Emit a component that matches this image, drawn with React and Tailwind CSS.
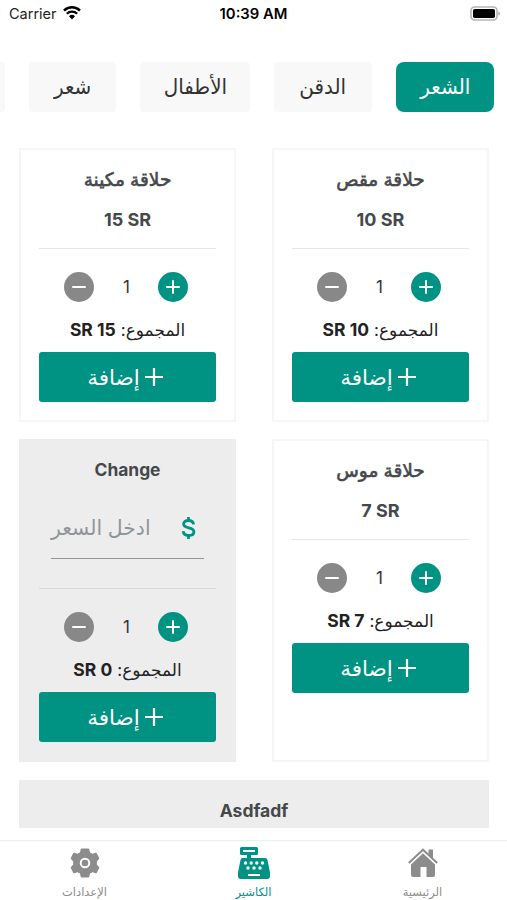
import React, { useState } from 'react';

const tabs = [
  { id: 1, label: 'الشعر', width: 'w-[98px]' },
  { id: 2, label: 'الدقن', width: 'w-[98px]' },
  { id: 3, label: 'الأطفال', width: 'w-[110px]' },
  { id: 4, label: 'شعر', width: 'w-[87px]' },
  { id: 5, label: '', width: 'w-[98px]' },
];

const services = [
  { id: 1, name: 'حلاقة مقص', price: 10 },
  { id: 2, name: 'حلاقة مكينة', price: 15 },
  { id: 3, name: 'حلاقة موس', price: 7 },
  { id: 4, name: 'Change', custom: true },
];

function StatusBar() {
  return (
    <div dir="ltr" className="grid h-7 shrink-0 grid-cols-3 items-center pl-[9px] pr-[6px] text-black">
      <div className="flex items-center gap-[6px]">
        <span className="text-[14.5px] leading-7 text-[#222]">Carrier</span>
        <svg className="-mt-[2px]" width="18" height="14" viewBox="0 0 18 14" fill="none" stroke="currentColor">
          <path d="M1 4.600a11.400 11.400 0 0 1 16 0" strokeWidth="2.500" />
          <path d="M3.800 7.700a7.400 7.400 0 0 1 10.400 0" strokeWidth="2.300" />
          <path d="M9 13.400 6 10.300a4.300 4.300 0 0 1 6 0z" fill="currentColor" stroke="none" />
        </svg>
      </div>
      <span className="-ml-[3px] text-center text-[14.8px] font-semibold leading-7">10:39 AM</span>
      <svg className="-mt-[2px] justify-self-end" width="31" height="15" viewBox="0 0 31 15">
        <rect x="1" y="1" width="26" height="13" rx="3.600" fill="#fff" stroke="#b5b5b5" strokeWidth="1.600" />
        <rect x="3" y="3" width="22" height="9" rx="1.800" fill="#000" />
        <path d="M28.300 5.400c2.200.6 2.200 3.600 0 4.200z" fill="#aaa" />
      </svg>
    </div>
  );
}

function RoundButton({ plus, onClick }) {
  return (
    <button
      onClick={onClick}
      className={`flex size-[30px] items-center justify-center rounded-full ${plus ? 'bg-[#009384]' : 'bg-[#888]'}`}
    >
      <svg width="14" height="14" viewBox="0 0 14 14" stroke="#fff" strokeWidth="2" strokeLinecap="round">
        <path d="M1 7h12" />
        {plus && <path d="M7 1v12" />}
      </svg>
    </button>
  );
}

function ServiceCard({ item }) {
  const [count, setCount] = useState(1);
  const total = (item.price || 0) * count;

  return (
    <div className={`flex flex-col border-2 px-[18px] pb-[18px] pt-[17px] ${item.custom ? 'border-[#ededed] bg-[#ededed]' : 'border-[#f6f6f6] bg-white'}`}>
      <h3 className="h-6 text-center text-[17.4px] font-bold leading-6 text-[#45484b]">
        {item.custom
          ? item.name
          : <span className="block text-[18.5px] font-normal leading-6 [-webkit-text-stroke:0.6px_#45484b]">{item.name}</span>}
      </h3>

      {item.custom ? (
        <div className="mx-3 mt-4 flex h-[61px] items-center justify-between border-b border-[#8d9599] pr-[8px]">
          <svg className="shrink-0" width="15" height="24" viewBox="0 0 15 24" fill="none" stroke="#009384" strokeWidth="2.800">
            <path d="M7.500 1v4M7.500 19v4" />
            <path d="M12.600 8.400C12.200 5.800 10.200 4.500 7.500 4.500c-2.900 0-4.900 1.400-4.900 3.600 0 5.200 10.300 2.300 10.300 7.600 0 2.400-2.200 3.800-5.200 3.800-3.100 0-5.300-1.500-5.500-4.300" />
          </svg>
          <span className="origin-left scale-x-[0.97] whitespace-nowrap text-[21px] text-[#8d9599]">ادخل السعر</span>
        </div>
      ) : (
        <p dir="ltr" className="mt-[17px] text-center text-[18px] font-bold leading-6 text-[#45484b]">{item.price} SR</p>
      )}

      <hr className={item.custom ? 'mt-[29px] border-[#d9d9d9]' : 'mt-4 border-[#e6e6e6]'} />

      <div className="mt-[23px] flex items-center justify-between pl-[25px] pr-[28px]">
        <RoundButton plus onClick={() => setCount(count + 1)} />
        <span className="pl-px text-[17px] leading-6 text-[#333]">{count}</span>
        <RoundButton onClick={() => setCount(Math.max(1, count - 1))} />
      </div>

      <div className="mt-4 flex h-6 items-center justify-center gap-[5px] text-[17px] leading-6 text-[#222]">
        <span>المجموع:</span>
        <b dir="ltr" className="text-[17.5px]">SR {total}</b>
      </div>

      <button className="mt-[10px] flex h-[50px] items-center justify-center gap-[5px] rounded-[3px] bg-[#009384] pl-[6px] pr-[11px] text-[21.5px] text-white">
        <svg width="18" height="18" viewBox="0 0 18 18" stroke="#fff" strokeWidth="2.200">
          <path d="M0 9h18M9 0v18" />
        </svg>
        <span className="inline-block">إضافة</span>
      </button>
    </div>
  );
}

function GearIcon() {
  return (
    <svg width="30" height="30" viewBox="0 0 30 30" fill="currentColor">
      <circle cx="15" cy="15" r="11.700" />
      <path d="M10.600 1.500Q10.800.5 11.800.5h6.400q1 0 1.200 1l.6 3.200 2.200 1.300 3.100-1.200q1-.4 1.500.5l2.300 4.400q.5.900-.3 1.500l-2.200 2.500v2.600l2.200 2.500q.8.600.3 1.500l-2.300 4.400q-.5.900-1.500.5l-3.100-1.200-2.200 1.300-.6 3.200q-.2 1-1.200 1h-6.400q-1 0-1.200-1l-.6-3.200-2.200-1.300-3.100 1.200q-1 .4-1.500-.5L.9 20.300q-.5-.9.3-1.500l2.200-2.500v-2.600l-2.200-2.500q-.8-.6-.3-1.500l2.300-4.400q.5-.9 1.500-.5L7.800 6 10 4.700z" />
      <circle cx="15" cy="15" r="4.300" fill="none" stroke="#fff" strokeWidth="2" />
    </svg>
  );
}

function RegisterIcon() {
  return (
    <svg width="34" height="34" viewBox="0 0 34 34" fill="currentColor">
      <path fillRule="evenodd" d="M4.500 1h15a1.500 1.500 0 0 1 1.500 1.500v5A1.500 1.500 0 0 1 19.500 9H14v3h14a2.500 2.500 0 0 1 2.500 2l2.500 12.500V30a3 3 0 0 1-3 3H4a3 3 0 0 1-3-3v-3.500L3.500 14A2.500 2.500 0 0 1 6 12h4V9H4.500A1.500 1.500 0 0 1 3 7.500v-5A1.500 1.500 0 0 1 4.500 1zM6 4v2h12V4z" />
      <g fill="#fff">
        <circle cx="8.500" cy="17" r="1.700" />
        <circle cx="14.200" cy="17" r="1.700" />
        <circle cx="19.800" cy="17" r="1.700" />
        <circle cx="25.500" cy="17" r="1.700" />
        <circle cx="11" cy="22" r="1.700" />
        <circle cx="17" cy="22" r="1.700" />
        <circle cx="23" cy="22" r="1.700" />
        <rect x="11" y="28" width="12" height="2" />
      </g>
    </svg>
  );
}

function HouseIcon() {
  return (
    <svg width="30" height="30" viewBox="0 0 30 30" fill="currentColor">
      <path d="M15 5.200 27 16.500V27a2 2 0 0 1-2 2h-6.500V19h-6v10H5a2 2 0 0 1-2-2V16.500z" />
      <path d="M.8 15 15 1.700 29.200 15" fill="none" stroke="currentColor" strokeWidth="2" />
      <path d="M20.500 1.500H25v9.500l-4.500-4.200z" />
    </svg>
  );
}

const navItems = [
  { label: 'الرئيسية', Icon: HouseIcon },
  { label: 'الكاشير', Icon: RegisterIcon, active: true },
  { label: 'الإعدادات', Icon: GearIcon },
];

export default function App() {
  const [activeTab, setActiveTab] = useState(1);

  return (
    <div dir="rtl" className="flex h-[900px] w-[507px] flex-col overflow-hidden bg-white font-['Inter','DejaVu_Sans',sans-serif]">
      <StatusBar />

      <div className="mt-[34px] flex shrink-0 gap-[24px] overflow-hidden pr-[13px]">
        {tabs.map(t => (
          <button
            key={t.id}
            onClick={() => setActiveTab(t.id)}
            className={`flex h-[50px] shrink-0 items-center justify-center text-[21px] ${t.width} ${t.id === activeTab ? 'rounded-lg bg-[#009384] text-white' : 'rounded-[4px] bg-[#f8f8f8] text-[#333]'}`}
          >
            <span className="scale-x-[0.95]">{t.label}</span>
          </button>
        ))}
      </div>

      <div className="mt-[36px] grid h-[680px] shrink-0 grid-cols-2 content-start gap-x-9 gap-y-[17px] overflow-hidden pl-[19px] pr-[18px]">
        {services.map(s => <ServiceCard key={s.id} item={s} />)}
        <div className="col-span-2 mt-px h-20 bg-[#ededed] pt-[19px] text-center text-[17.5px] font-bold leading-6 text-[#45484b]">
          Asdfadf
        </div>
      </div>

      <nav className="mt-3 grid h-[60px] shrink-0 grid-cols-3 border-t border-[#eee]">
        {navItems.map(({ label, Icon, active }) => (
          <button key={label} className={`flex flex-col items-center ${active ? 'text-[#009384]' : 'text-[#8c8c8c]'}`}>
            <span className="flex h-[43px] items-center"><Icon /></span>
            <span className="text-[11.5px] leading-4">{label}</span>
          </button>
        ))}
      </nav>
    </div>
  );
}
